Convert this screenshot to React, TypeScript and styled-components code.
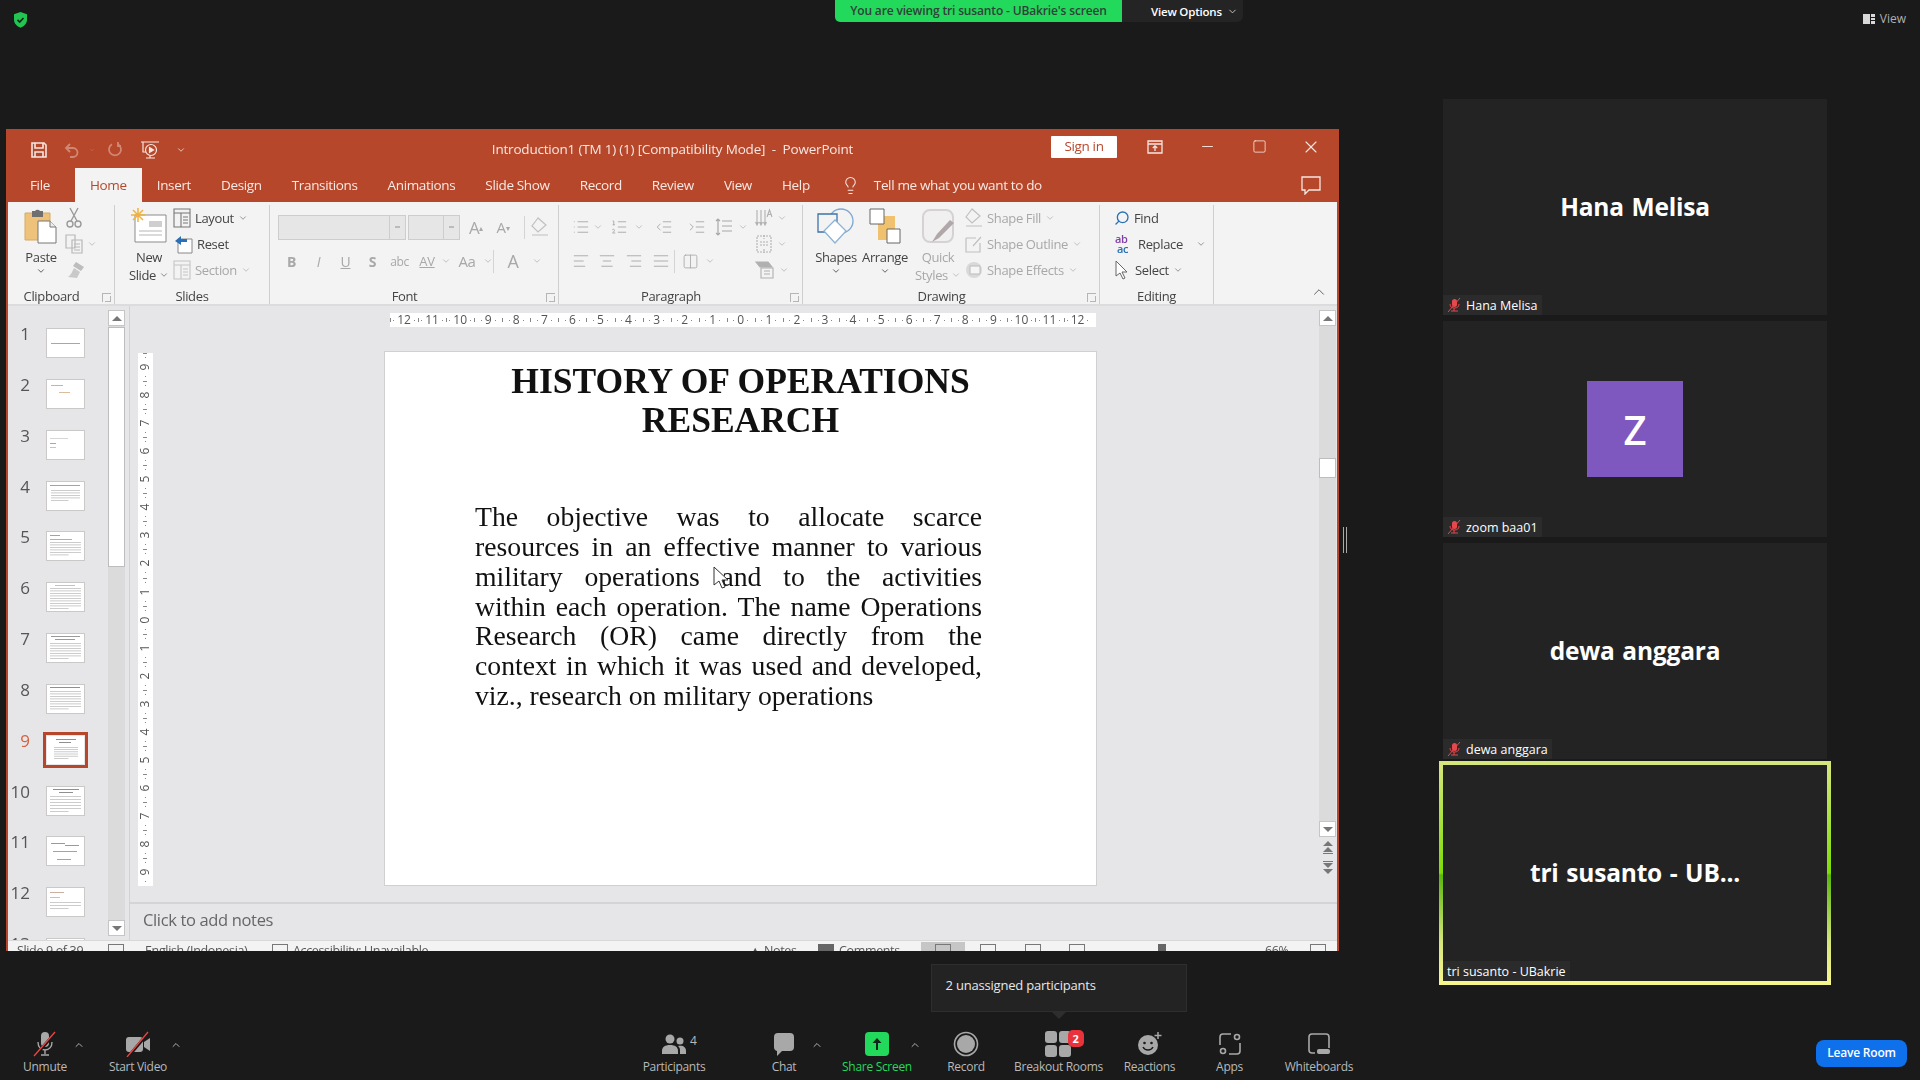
import React from "react";
import styled, { createGlobalStyle } from "styled-components";
import {
  AlignCenter,
  AlignJustify,
  AlignLeft,
  AlignRight,
  ChevronDown,
  ChevronUp,
  Columns2,
  IndentDecrease,
  IndentIncrease,
  Lightbulb,
  List,
  ListOrdered,
  Minus,
  Search,
  Square,
  X,
} from "lucide-react";

const ACCENT = "#b7472a";
const MUTED = "#a8a8a8";
const UI_FONT = '"Open Sans", "Noto Sans", sans-serif';

const GlobalStyle = createGlobalStyle`
  html, body { margin: 0; padding: 0; background: #1a1a1a; }
  #root { width: 1920px; height: 1080px; overflow: hidden; }
  * { box-sizing: border-box; }
`;

const Page = styled.div`
  width: 1920px;
  height: 1080px;
  display: flex;
  flex-direction: column;
  background: #1a1a1a;
  font-family: ${UI_FONT};
  color: #fff;
`;

/* ---- zoom top strip ---- */
const TopBar = styled.header`
  height: 22px;
  display: flex;
  align-items: flex-start;
`;
const ShieldSlot = styled.div`
  width: 835px;
  padding: 11px 0 0 12px;
`;
const ViewingBanner = styled.div`
  width: 287px;
  height: 22px;
  background: #23d95c;
  border-bottom-left-radius: 5px;
  color: #2f4238;
  font-size: 12px;
  font-weight: 600;
  line-height: 21px;
  letter-spacing: -0.15px;
  text-align: center;
`;
const OptionsButton = styled.div`
  width: 121px;
  height: 22px;
  background: #242424;
  border-bottom-right-radius: 6px;
  display: flex;
  align-items: center;
  padding-left: 29px;
  gap: 5px;
  font-size: 11.5px;
  font-weight: 600;
  letter-spacing: -0.2px;
`;
const ViewToggle = styled.div`
  margin: 10px 14px 0 auto;
  display: flex;
  align-items: center;
  gap: 5px;
  font-size: 12px;
  color: #b0b0b0;
`;

/* ---- middle ---- */
const Middle = styled.main`
  flex: 1;
  display: flex;
  min-height: 0;
  padding-left: 6px;
`;
const SharedScreen = styled.div`
  padding-top: 107px;
`;
const Handle = styled.div`
  width: 4px;
  height: 26px;
  margin: 505px 0 0 4px;
  border-left: 1px solid #aaa;
  border-right: 1px solid #aaa;
`;

/* ---- powerpoint ---- */
const Window = styled.section`
  width: 1333px;
  height: 822px;
  overflow: hidden;
  background: ${ACCENT};
  padding: 0 2px;
  display: flex;
  flex-direction: column;
  filter: blur(0.45px);
  font-size: 13px;
  letter-spacing: -0.35px;
  color: #444;
`;
const TitleRow = styled.div`
  height: 39px;
  flex: none;
  margin: 0 -2px;
  display: grid;
  grid-template-columns: 1fr auto 1fr;
  align-items: center;
  color: #f6e7e2;
  font-size: 13.5px;
`;
const WindowTitle = styled.div`
  letter-spacing: -0.2px;
  padding-top: 1px;
`;
const QuickAccess = styled.div`
  display: flex;
  align-items: center;
  padding: 2px 0 0 17px;
`;
const QatButton = styled.span<{ $off?: boolean; $w: number }>`
  width: ${(p) => p.$w}px;
  display: flex;
  justify-content: center;
  opacity: ${(p) => (p.$off ? 0.35 : 1)};
`;
const WindowButtons = styled.div`
  display: flex;
  align-items: center;
  justify-content: flex-end;
  margin-top: -4px;
  padding-right: 2px;
`;
const SignIn = styled.div`
  width: 66px;
  height: 22px;
  margin-right: 12px;
  background: #fff;
  color: ${ACCENT};
  font-size: 13.5px;
  line-height: 21px;
  text-align: center;
  border-radius: 1px;
`;
const CaptionButton = styled.span`
  width: 52px;
  display: flex;
  justify-content: center;
`;
const TabRow = styled.nav`
  height: 34px;
  flex: none;
  display: flex;
  align-items: stretch;
  margin: 0 -2px;
  padding-left: 9px;
  color: #f7e9e4;
  font-size: 13.5px;
`;
const Tab = styled.div<{ $active?: boolean; $mr?: number }>`
  padding: 0 15px;
  margin-right: ${(p) => p.$mr ?? 0}px;
  display: flex;
  align-items: center;
  background: ${(p) => (p.$active ? "#f3f3f3" : "transparent")};
  color: ${(p) => (p.$active ? ACCENT : "inherit")};
  font-weight: ${(p) => (p.$active ? 500 : 400)};
`;
const TellMe = styled.div`
  margin-left: 16px;
  display: flex;
  align-items: center;
  gap: 14px;
`;
const CommentSlot = styled.div`
  margin-left: auto;
  padding-right: 18px;
  display: flex;
  align-items: center;
`;

const Ribbon = styled.div`
  height: 104px;
  flex: none;
  background: #f3f3f3;
  border-bottom: 2px solid #dcdcdc;
  display: flex;
  padding: 3px 0 0;
  position: relative;
`;
const Group = styled.div<{ $w: number }>`
  width: ${(p) => p.$w}px;
  flex: none;
  display: flex;
  flex-direction: column;
  position: relative;
  border-right: 1px solid #cfcfcf;
`;
const GroupBody = styled.div<{ $pad?: number }>`
  height: 83px;
  flex: none;
  display: flex;
  padding-left: ${(p) => p.$pad ?? 0}px;
`;
const GroupLabel = styled.div<{ $shift?: boolean }>`
  flex: 1;
  text-align: center;
  font-size: 13px;
  line-height: 17px;
  padding-right: ${(p) => (p.$shift ? 19 : 0)}px;
  color: #444;
`;
const Launcher = styled.span`
  position: absolute;
  right: 3px;
  bottom: 2px;
  width: 9px;
  height: 9px;
  border: 1px solid #b5b5b5;
  border-width: 1px 0 0 1px;
  &::after {
    content: "";
    position: absolute;
    right: 0;
    bottom: 0;
    width: 5px;
    height: 5px;
    border: 1px solid #b5b5b5;
    border-width: 0 1px 1px 0;
  }
`;
const BigButton = styled.div<{ $w: number; $off?: boolean }>`
  width: ${(p) => p.$w}px;
  flex: none;
  display: flex;
  flex-direction: column;
  align-items: center;
  color: ${(p) => (p.$off ? MUTED : "#444")};
  line-height: 18px;
`;
const BigIcon = styled.div`
  height: 43px;
  display: flex;
  align-items: flex-start;
  justify-content: center;
  padding-top: 3px;
`;
const Stack = styled.div<{ $w?: number }>`
  ${(p) => (p.$w ? `width: ${p.$w}px;` : "")}
  flex: none;
  display: flex;
  flex-direction: column;
`;
const SmallRow = styled.div<{ $off?: boolean }>`
  height: 26px;
  flex: none;
  display: flex;
  align-items: center;
  gap: 4px;
  color: ${(p) => (p.$off ? MUTED : "#444")};
  white-space: nowrap;
`;
const FontRow = styled.div<{ $h: number }>`
  height: ${(p) => p.$h}px;
  flex: none;
  display: flex;
  align-items: center;
  color: ${MUTED};
`;
const Combo = styled.div<{ $w: number }>`
  width: ${(p) => p.$w}px;
  height: 25px;
  margin-right: 2px;
  background: #e6e6e6;
  border: 1px solid #cdcdcd;
  display: flex;
  justify-content: flex-end;
  align-items: center;
  &::after {
    content: "";
    width: 15px;
    height: 100%;
    border-left: 1px solid #cdcdcd;
    background: linear-gradient(#bbb, #bbb) center / 5px 2px no-repeat;
  }
`;
const Cell = styled.span<{ $w: number; $size?: number; $weight?: number; $italic?: boolean; $under?: boolean }>`
  width: ${(p) => p.$w}px;
  flex: none;
  display: inline-flex;
  align-items: center;
  justify-content: center;
  font-size: ${(p) => p.$size ?? 14}px;
  font-weight: ${(p) => p.$weight ?? 400};
  font-style: ${(p) => (p.$italic ? "italic" : "normal")};
  text-decoration: ${(p) => (p.$under ? "underline" : "none")};
`;
const Raised = styled.sup`
  font-size: 8px;
`;
const VSep = styled.span`
  width: 1px;
  height: 23px;
  background: #d4d4d4;
  flex: none;
`;
const CollapseSlot = styled.span`
  position: absolute;
  right: 9px;
  bottom: -1px;
  color: #555;
`;

const Workspace = styled.div`
  height: 634px;
  flex: none;
  display: flex;
  background: #e6e6e8;
`;
const SlidePane = styled.aside`
  width: 122px;
  flex: none;
  display: flex;
  border-right: 1px solid #d2d2d2;
  height: 634px;
`;
const ThumbList = styled.div`
  width: 100px;
  height: 634px;
  overflow: hidden;
  padding-top: 23px;
  flex: none;
`;
const ThumbRow = styled.div`
  height: 50.85px;
  flex: none;
  display: flex;
  gap: 17px;
  align-items: flex-start;
`;
const ThumbNum = styled.span<{ $active?: boolean }>`
  width: 22px;
  margin-top: -5px;
  text-align: right;
  font-size: 17px;
  line-height: 20px;
  letter-spacing: 0;
  color: ${(p) => (p.$active ? "#d5613f" : "#555")};
`;
const Thumb = styled.svg<{ $active?: boolean }>`
  width: 37px;
  height: 28px;
  background: #fff;
  outline: ${(p) => (p.$active ? `3px solid ${ACCENT}` : "1px solid #cbc8c8")};
  outline-offset: ${(p) => (p.$active ? "1px" : "0")};
  display: block;
`;
const Scrollbar = styled.div<{ $h: number }>`
  width: 17px;
  height: ${(p) => p.$h}px;
  margin-top: 4px;
  flex: none;
  background: #dcdbdc;
  display: flex;
  flex-direction: column;
  align-items: center;
  justify-content: flex-start;
`;
const ScrollStep = styled.div<{ $down?: boolean }>`
  width: 17px;
  height: 16px;
  flex: none;
  background: #fff;
  border: 1px solid #c5c5c5;
  display: flex;
  align-items: center;
  justify-content: center;
  &::after {
    content: "";
    border-left: 5px solid transparent;
    border-right: 5px solid transparent;
    ${(p) => (p.$down ? "border-top" : "border-bottom")}: 5px solid #777;
  }
`;
const ScrollThumb = styled.div<{ $h: number; $top?: number }>`
  width: 17px;
  height: ${(p) => p.$h}px;
  flex: none;
  margin-top: ${(p) => p.$top ?? 1}px;
  background: #fff;
  border: 1px solid #bdbdbd;
`;
const ScrollGap = styled.div`
  flex: 1;
`;
const RightRail = styled.div`
  width: 17px;
  margin-right: 1px;
  flex: none;
  display: flex;
  flex-direction: column;
  align-items: center;
`;
const PageStep = styled.div`
  height: 20px;
  flex: none;
  display: flex;
  align-items: center;
  justify-content: center;
`;

const EditorColumn = styled.div`
  flex: 1;
  min-width: 0;
  display: flex;
  flex-direction: column;
`;
const EditorMain = styled.div`
  height: 596px;
  flex: none;
  display: flex;
`;
const Canvas = styled.div`
  flex: 1;
  min-width: 0;
  display: flex;
  flex-direction: column;
  padding-top: 7px;
`;
const HRuler = styled.div`
  margin-left: 260px;
  width: 706px;
  height: 14px;
  flex: none;
  background: #fff;
  display: flex;
`;
const RulerCell = styled.span`
  position: relative;
  width: 28.07px;
  flex: none;
  display: flex;
  align-items: center;
  justify-content: center;
  gap: 3px;
  font-size: 12px;
  letter-spacing: 0;
  line-height: 14px;
  color: #555;
`;
const Tick = styled.i`
  position: absolute;
  left: 0;
  top: 5px;
  width: 1px;
  height: 4px;
  background: #888;
`;
const Dot = styled.i`
  width: 1px;
  height: 1px;
  background: #888;
  flex: none;
`;
const CanvasBody = styled.div`
  display: flex;
  align-items: flex-start;
  padding: 24px 0 0 8px;
`;
const VRuler = styled.div`
  width: 15px;
  height: 533px;
  margin-top: 2px;
  flex: none;
  background: #fff;
  display: flex;
  flex-direction: column;
`;
const VRulerCell = styled.span`
  position: relative;
  height: 28.07px;
  flex: none;
  display: flex;
  flex-direction: column;
  align-items: center;
  justify-content: center;
  gap: 3px;
  font-size: 12px;
  letter-spacing: 0;
  line-height: 12px;
  color: #555;
  & b {
    font-weight: 400;
    transform: rotate(-90deg);
  }
`;
const VTick = styled.i`
  position: absolute;
  left: 5px;
  top: 0;
  width: 4px;
  height: 1px;
  background: #888;
`;
const Slide = styled.article`
  width: 713px;
  height: 535px;
  margin-left: 231px;
  flex: none;
  position: relative;
  background: #fff;
  border: 1px solid #d0d0d0;
  color: #111;
  font-family: "Liberation Serif", "Times New Roman", serif;
  letter-spacing: 0;
  padding-top: 10px;
`;
const SlideTitle = styled.h1`
  margin: 0;
  font-size: 35.5px;
  line-height: 38.5px;
  font-weight: 700;
  text-align: center;
`;
const SlideBody = styled.p`
  margin: 63px 0 0 90px;
  width: 507px;
  font-size: 27.7px;
  line-height: 29.85px;
  text-align: justify;
`;
const Pointer = styled.svg`
  position: absolute;
  left: 328px;
  top: 214px;
`;
const NotesRow = styled.div`
  height: 38px;
  flex: none;
  border-top: 2px solid #d4d4d4;
  padding: 4px 0 0 13px;
  font-size: 16.5px;
  color: #666;
`;
const StatusBar = styled.footer`
  height: 30px;
  flex: none;
  background: #f3f3f3;
  border-top: 1px solid #d8d8d8;
  display: flex;
  padding-top: 1px;
  font-size: 12.5px;
  color: #555;
`;
const StatusItem = styled.span<{ $w: number; $on?: boolean; $pad?: number }>`
  width: ${(p) => p.$w}px;
  padding-left: ${(p) => p.$pad ?? 0}px;
  flex: none;
  display: flex;
  gap: 5px;
  white-space: nowrap;
  background: ${(p) => (p.$on ? "#c6c6c6" : "transparent")};
`;
const StatusGlyph = styled.span<{ $solid?: boolean; $narrow?: boolean }>`
  width: ${(p) => (p.$narrow ? 8 : 16)}px;
  height: 16px;
  margin-top: 2px;
  flex: none;
  border: 1.5px solid ${(p) => (p.$solid ? "#666" : "#777")};
  background: ${(p) => (p.$solid ? "#666" : "transparent")};
`;

/* ---- gallery ---- */
const Gallery = styled.aside`
  width: 392px;
  margin-left: 92px;
  padding-top: 77px;
  display: flex;
  flex-direction: column;
  align-items: center;
  gap: 6px;
`;
const Tile = styled.div<{ $active?: boolean }>`
  position: relative;
  width: ${(p) => (p.$active ? 392 : 384)}px;
  height: ${(p) => (p.$active ? 224 : 216)}px;
  flex: none;
  margin-top: ${(p) => (p.$active ? -4 : 0)}px;
  display: flex;
  align-items: center;
  justify-content: center;
  background: #232323;
  ${(p) =>
    p.$active
      ? "border: 4px solid; border-image: linear-gradient(#d6e67c, #7fdc06 50%, #5cb60c 51%, #d6e67c 82%, #f6f68c) 1;"
      : ""}
`;
const TileName = styled.div`
  padding-bottom: 2px;
  font-size: 24.5px;
  font-weight: 700;
  letter-spacing: -0.2px;
  word-spacing: 1.5px;
  color: #fff;
`;
const Avatar = styled.div`
  width: 96px;
  height: 96px;
  background: #7f58bf;
  display: flex;
  align-items: center;
  justify-content: center;
  font-size: 40px;
  font-weight: 600;
`;
const NameChip = styled.div`
  position: absolute;
  left: 0;
  bottom: 0;
  height: 20px;
  padding: 0 4px;
  display: flex;
  align-items: center;
  gap: 5px;
  background: #2b2b2b;
  font-size: 12.5px;
  color: #fff;
`;

/* ---- zoom toolbar ---- */
const Toolbar = styled.footer`
  height: 56px;
  flex: none;
  display: flex;
  padding-left: 8px;
`;
const ToolGroup = styled.div<{ $left?: number }>`
  display: flex;
  ${(p) => (p.$left ? `margin-left: ${p.$left}px;` : "")}
`;
const ToolItem = styled.div<{ $w: number; $green?: boolean; $mr?: number }>`
  position: relative;
  width: ${(p) => p.$w}px;
  margin-right: ${(p) => p.$mr ?? 0}px;
  flex: none;
  display: flex;
  flex-direction: column;
  align-items: center;
  padding-top: 6px;
  font-size: 12px;
  letter-spacing: -0.3px;
  white-space: nowrap;
  color: ${(p) => (p.$green ? "#23d95c" : "#b9b9b9")};
`;
const ToolIcon = styled.div`
  height: 28px;
  display: flex;
  align-items: center;
  justify-content: center;
  position: relative;
`;
const Caret = styled.span<{ $x: number }>`
  position: absolute;
  top: 14px;
  left: calc(50% + ${(p) => p.$x}px);
  color: #b0b0b0;
`;
const CountLabel = styled.span`
  position: absolute;
  left: 100%;
  top: 2px;
  margin-left: 4px;
  font-size: 12px;
  color: #b9b9b9;
`;
const Badge = styled.span`
  position: absolute;
  top: 0;
  left: 23px;
  width: 16px;
  height: 17px;
  border-radius: 5px;
  background: #e9323c;
  color: #fff;
  font-size: 11px;
  font-weight: 700;
  line-height: 17px;
  text-align: center;
`;
const Hint = styled.div`
  position: absolute;
  left: calc(50% - 128px);
  bottom: calc(100% + 12px);
  width: 256px;
  height: 48px;
  padding: 0 0 6px 14px;
  background: #232323;
  border: 1px solid #2e2e2e;
  display: flex;
  align-items: center;
  font-size: 13px;
  letter-spacing: -0.2px;
  color: #e8e8e8;
  &::after {
    content: "";
    position: absolute;
    left: 119px;
    top: 100%;
    border-left: 8px solid transparent;
    border-right: 8px solid transparent;
    border-top: 8px solid #2e2e2e;
  }
`;
const LeaveButton = styled.div`
  width: 91px;
  height: 27px;
  margin: 16px 13px 0 auto;
  border-radius: 8px;
  background: #0e71eb;
  color: #fff;
  font-size: 12px;
  font-weight: 600;
  letter-spacing: -0.2px;
  line-height: 26px;
  text-align: center;
`;

/* ---- drawings ---- */
const Shield = () => (
  <svg width="17" height="18" viewBox="0 0 17 18">
    <path d="M8.5 1 15 3.2v5.3c0 4-2.8 6.8-6.5 8.2C4.8 15.3 2 12.5 2 8.5V3.2z" fill="#23c552" />
    <path d="m5.5 8.8 2.2 2.2 3.8-4" fill="none" stroke="#10281a" strokeWidth="1.7" />
  </svg>
);
const SaveIcon = () => (
  <svg width="18" height="18" viewBox="0 0 18 18" fill="none" stroke="#f6e7e2" strokeWidth="1.6">
    <path d="M2 2h12l2 2v12H2z" />
    <path d="M5 2v5h8V2M5 16v-5h8v5" />
  </svg>
);
const UndoIcon = () => (
  <svg width="16" height="16" viewBox="0 0 16 16" fill="none" stroke="#fff" strokeWidth="1.8">
    <path d="M6 2 2 6l4 4M2 6h7a4.5 4.5 0 0 1 0 9H6" />
  </svg>
);
const RedoIcon = () => (
  <svg width="16" height="17" viewBox="0 0 16 17" fill="none" stroke="#fff" strokeWidth="1.8">
    <path d="M11 3.2a6 6 0 1 1-6 0M11 1v4h3" />
  </svg>
);
const PresentIcon = () => (
  <svg width="20" height="20" viewBox="0 0 20 20" fill="none" stroke="#f6e7e2" strokeWidth="1.2">
    <path d="M1 2h18M3 2v10h3M6 18h9" />
    <circle cx="11" cy="10" r="5.5" />
    <path d="m9.5 7.5 4 2.5-4 2.5z" fill="#f6e7e2" />
    <path d="M10 15.5V18" />
  </svg>
);
const RibbonDisplay = () => (
  <svg width="16" height="14" viewBox="0 0 16 14" fill="none" stroke="#f6e7e2" strokeWidth="1.3">
    <path d="M1 1h14v12H1zM1 4h14M8 11V6M5.8 8 8 5.8 10.2 8" />
  </svg>
);
const CommentIcon = () => (
  <svg width="20" height="19" viewBox="0 0 20 19" fill="none" stroke="#f6e7e2" strokeWidth="1.3">
    <path d="M1 1h18v13H8l-4 4v-4H1z" />
  </svg>
);
const PasteIcon = () => (
  <svg width="34" height="36" viewBox="0 0 34 36">
    <path d="M1 5h25v27H1z" fill="#eec27a" stroke="#d7ab62" />
    <path d="M8 3h3a3 3 0 0 1 5 0h3v6H8z" fill="#6f6f6f" />
    <path d="M14 13h12l6 6v16H14z" fill="#fff" stroke="#777" />
    <path d="M26 13v6h6" fill="#eee" stroke="#777" />
  </svg>
);
const ScissorsIcon = () => (
  <svg width="18" height="22" viewBox="0 0 18 22" fill="none" stroke="#9a9a9a" strokeWidth="1.4">
    <circle cx="5" cy="17" r="3" />
    <circle cx="13" cy="17" r="3" />
    <path d="M6 14 13 1M12 14 5 1" />
  </svg>
);
const CopyIcon = () => (
  <svg width="18" height="20" viewBox="0 0 18 20" fill="none" stroke="#b8b8b8" strokeWidth="1.2">
    <path d="M1 1h9v13H1zM7 6h10v13H7zM9 10h6M9 13h6M9 16h6" />
  </svg>
);
const PainterIcon = () => (
  <svg width="20" height="18" viewBox="0 0 20 18">
    <path d="M11 1 19 6l-3 4-8-5z" fill="#bdbdbd" />
    <path d="M9 7 15 11l-3 6-9-1c3-2 4-5 6-9z" fill="#c9c9c9" />
  </svg>
);
const NewSlideIcon = () => (
  <svg width="36" height="36" viewBox="0 0 36 36">
    <path d="M4 7h31v27H4z" fill="#fff" stroke="#8b8b8b" />
    <path d="M18 13h13v6H18z" fill="#cfcfcf" />
    <path d="M8 23h23M8 27h23" stroke="#b5b5b5" />
    <g stroke="#f0b341" strokeWidth="1.5">
      <path d="M7 0v14M0 7h14M2 2l10 10M12 2 2 12" />
    </g>
  </svg>
);
const LayoutIcon = ({ off }: { off?: boolean }) => (
  <svg width="18" height="20" viewBox="0 0 18 20" fill="none" stroke={off ? "#c4c4c4" : "#777"} strokeWidth="1.1">
    <path d="M1 1h16v18H1zM1 5h16M8 5v14M10 9h5M10 12h5M10 15h5" />
  </svg>
);
const ResetIcon = () => (
  <svg width="20" height="20" viewBox="0 0 20 20">
    <path d="M5 5h14v14H5z" fill="#fff" stroke="#888" />
    <path d="M8 2 2 7l6 4V8h6V5H8z" fill="#2a70b5" />
  </svg>
);
const ShapesIcon = () => (
  <svg width="38" height="36" viewBox="0 0 38 36" fill="none" strokeWidth="1.3">
    <circle cx="24" cy="13" r="12" stroke="#7fa8cf" />
    <path d="M1 6h19v18H1z" fill="#f3f3f3" stroke="#3e74a8" />
    <path d="m18 12 11 11-11 12L7 23z" fill="#fff" stroke="#8cb2d6" />
  </svg>
);
const ArrangeIcon = () => (
  <svg width="32" height="36" viewBox="0 0 32 36">
    <path d="M9 8h17v24H9z" fill="#f0c26f" />
    <path d="M1 1h14v15H1z" fill="#fff" stroke="#666" />
    <path d="M18 21h13v14H18z" fill="#fff" stroke="#666" />
  </svg>
);
const QuickStylesIcon = () => (
  <svg width="34" height="38" viewBox="0 0 34 38">
    <rect x="2" y="2" width="30" height="32" rx="7" fill="#f0f0f0" stroke="#d6d2d2" strokeWidth="2" />
    <path d="M33 15 18 30l-7 4 5-8 13-14z" fill="#b0a8a8" />
  </svg>
);
const FillIcon = () => (
  <svg width="18" height="20" viewBox="0 0 18 20" fill="none" stroke="#c0c0c0" strokeWidth="1.2">
    <path d="M7 1 1 9l6 6 8-7zM1 18h16" />
  </svg>
);
const OutlineIcon = () => (
  <svg width="18" height="18" viewBox="0 0 18 18" fill="none" stroke="#c0c0c0" strokeWidth="1.2">
    <path d="M1 3h10M1 3v14h14V8M8 11 16 2" />
  </svg>
);
const EffectsIcon = () => (
  <svg width="18" height="18" viewBox="0 0 18 18">
    <circle cx="9" cy="9" r="8" fill="#d9d9d9" />
    <path d="M5 5h10v8H5z" fill="#f5f5f5" stroke="#bbb" />
  </svg>
);
const ReplaceIcon = () => (
  <svg width="20" height="20" viewBox="0 0 20 20" fontSize="11" fontFamily={UI_FONT} fontWeight="600">
    <text x="1" y="9" fill="#7f3fa8">ab</text>
    <text x="3" y="19" fill="#2a70b5">ac</text>
  </svg>
);
const SelectIcon = () => (
  <svg width="14" height="20" viewBox="0 0 14 20" fill="#fff" stroke="#666">
    <path d="M2 1v15l4-3 3 6 2-1-3-6h5z" />
  </svg>
);
const TextDirIcon = () => (
  <svg width="18" height="20" viewBox="0 0 18 20" fill="none" stroke="#b0b0b0" strokeWidth="1.1">
    <path d="M2 2v14M6 2v14M10 2v14M.5 14 2 17l1.5-3M4.5 14 6 17l1.5-3M8.5 14l1.5 3 1.5-3" />
    <path d="m12 9 2.5-7L17 9M13 6.5h3" />
  </svg>
);
const AlignTextIcon = () => (
  <svg width="18" height="20" viewBox="0 0 18 20" fill="none" stroke="#b0b0b0" strokeWidth="1.1">
    <path d="M2 2h14v16H2zM5 8h8M5 11h8M9 1v4M9 15v4" strokeDasharray="2 1" />
  </svg>
);
const SmartArtIcon = () => (
  <svg width="20" height="20" viewBox="0 0 20 20" fill="none" stroke="#b0b0b0" strokeWidth="1.1">
    <path d="M1 2h12l4 5H5z" fill="#b0b0b0" />
    <path d="M6 8h12v10H6zM9 11h6M9 14h6" />
  </svg>
);
const LineSpacing = () => (
  <svg width="18" height="20" viewBox="0 0 18 20" fill="none" stroke="#a8a8a8" strokeWidth="1.2">
    <path d="M7 4h10M7 9h10M7 14h10M3 2v16M1 4l2-2 2 2M1 16l2 2 2-2" />
  </svg>
);
const PageUp = () => (
  <svg width="12" height="13" viewBox="0 0 12 13" fill="#777">
    <path d="M6 0 11 5H1zM6 6l5 5H1z" />
    <path d="M1 12h10v1H1z" />
  </svg>
);
const PageDown = () => (
  <svg width="12" height="13" viewBox="0 0 12 13" fill="#777">
    <path d="M1 0h10v1H1zM1 2h10L6 7zM1 8h10l-5 5z" />
  </svg>
);
const Cursor = () => (
  <Pointer width="16" height="24" viewBox="0 0 16 24" fill="#fff" stroke="#333">
    <path d="M1 1v18l5-4 3 7 3-1-3-7h6z" />
  </Pointer>
);
const SlashMic = () => (
  <svg width="26" height="26" viewBox="0 0 26 26" fill="none">
    <rect x="9" y="1" width="8" height="15" rx="4" fill="#a8a8a8" />
    <path d="M6 11c0 5 3 8 7 8s7-3 7-8M13 19v4M9 24h8" stroke="#a8a8a8" strokeWidth="1.4" />
    <path d="M3 25 24 1" stroke="#1a1a1a" strokeWidth="3" />
    <path d="M2 25 23 1" stroke="#e44" strokeWidth="1.3" />
  </svg>
);
const SlashVideo = () => (
  <svg width="26" height="26" viewBox="0 0 26 26" fill="none">
    <rect x="1" y="6" width="17" height="15" rx="3" fill="#a8a8a8" />
    <path d="M19 11 25 7v13l-6-4z" fill="#a8a8a8" />
    <path d="M3 26 24 1" stroke="#1a1a1a" strokeWidth="3" />
    <path d="M2 26 23 1" stroke="#e44" strokeWidth="1.3" />
  </svg>
);
const PeopleIcon = () => (
  <svg width="24" height="21" viewBox="0 0 24 21" fill="#a8a8a8">
    <circle cx="8" cy="5" r="4.5" />
    <circle cx="18" cy="7" r="3.5" />
    <path d="M0 20v-3c0-4 3-6 8-6s8 2 8 6v3z" />
    <path d="M18 20v-4c0-2-1-3-2-4 5-1 8 1 8 5v3z" />
  </svg>
);
const ChatIcon = () => (
  <svg width="22" height="25" viewBox="0 0 22 25" fill="#a8a8a8">
    <path d="M5 1h12a4 4 0 0 1 4 4v10a4 4 0 0 1-4 4H9l-5 5v-5a4 4 0 0 1-3-4V5a4 4 0 0 1 4-4z" />
  </svg>
);
const ShareIcon = () => (
  <svg width="24" height="24" viewBox="0 0 24 24">
    <rect width="24" height="24" rx="4" fill="#23d95c" />
    <path d="M12 6 7.5 11H11v7h2v-7h3.5z" fill="#10241a" />
  </svg>
);
const RecordIcon = () => (
  <svg width="26" height="26" viewBox="0 0 26 26">
    <circle cx="13" cy="13" r="11.5" fill="none" stroke="#a8a8a8" strokeWidth="1.6" />
    <circle cx="13" cy="13" r="9" fill="#a8a8a8" />
  </svg>
);
const BreakoutIcon = () => (
  <svg width="28" height="28" viewBox="0 0 28 28" fill="#a8a8a8">
    <rect x="0" y="1" width="12" height="12" rx="3" />
    <rect x="14" y="1" width="12" height="12" rx="3" />
    <rect x="0" y="15" width="12" height="12" rx="3" />
    <rect x="14" y="15" width="12" height="12" rx="3" />
  </svg>
);
const ReactionIcon = () => (
  <svg width="26" height="26" viewBox="0 0 26 26">
    <circle cx="11" cy="14" r="10" fill="#a8a8a8" />
    <circle cx="7.5" cy="12" r="1.3" fill="#1a1a1a" />
    <circle cx="14.5" cy="12" r="1.3" fill="#1a1a1a" />
    <path d="M6 16c2 4 8 4 10 0" fill="none" stroke="#1a1a1a" strokeWidth="1.4" />
    <path d="M21 1v7M17.5 4.5h7" stroke="#a8a8a8" strokeWidth="1.5" />
  </svg>
);
const AppsIcon = () => (
  <svg width="24" height="24" viewBox="0 0 24 24" fill="none" stroke="#a8a8a8" strokeWidth="1.6">
    <path d="M13 2H5a3 3 0 0 0-3 3v8M11 22h8a3 3 0 0 0 3-3v-8" />
    <circle cx="19" cy="5" r="2.5" />
    <circle cx="5" cy="19" r="2.5" />
  </svg>
);
const BoardIcon = () => (
  <svg width="24" height="24" viewBox="0 0 24 24" fill="none" stroke="#a8a8a8" strokeWidth="1.6">
    <path d="M8 21H5a3 3 0 0 1-3-3V5a3 3 0 0 1 3-3h14a3 3 0 0 1 3 3v11" />
    <rect x="10" y="17" width="13" height="5" rx="2" fill="#a8a8a8" stroke="none" />
  </svg>
);
const MutedMic = () => (
  <svg width="14" height="14" viewBox="0 0 14 14" fill="none">
    <rect x="5" y="1" width="5" height="8" rx="2.5" fill="#e5484d" />
    <path d="M3 6c0 3 2 4 4.5 4S12 9 12 6M7 10v3M4 13h7" stroke="#e5484d" />
    <path d="M1 14 13 0" stroke="#e5484d" />
  </svg>
);
const ViewGridIcon = () => (
  <svg width="12" height="12" viewBox="0 0 12 12" fill="#d8d8d8">
    <path d="M0 1h7v10H0zM8 1h4v3H8zM8 5h4v2H8zM8 8h4v3H8z" />
  </svg>
);

/* ---- data ---- */
type Bar = [number, number, number, string?];

const textLines = (top: number, count: number, step: number, left = 4, width = 29): Bar[] =>
  Array.from({ length: count }, (_, i) => [left, top + i * step, i === count - 1 ? width * 0.6 : width] as Bar);

const THUMBS: Bar[][] = [
  [[4, 14, 29, "#c9405a"]],
  [[4, 5, 12, "#888"], [12, 12, 11, "#c09060"]],
  [[3, 7, 18, "#bbb"], [3, 12, 6, "#c9405a"], [3, 16, 6, "#999"]],
  [[3, 3, 30, "#666"], ...textLines(8, 5, 2.5)],
  [[3, 3, 10, "#666"], [3, 7, 22, "#5080c0"], ...textLines(10, 6, 2.5, 3, 31)],
  [[8, 2, 20, "#999"], ...textLines(5, 9, 2.5, 3, 31)],
  [[4, 2, 29, "#555"], [8, 5, 20, "#555"], ...textLines(9, 7, 2.5, 3, 31)],
  [[3, 2, 30, "#444"], ...textLines(6, 8, 2.5, 3, 31)],
  [[9, 3, 20, "#444"], [12, 6, 12, "#444"], ...textLines(11, 6, 2.2, 7, 24)],
  [[6, 2, 26, "#444"], [12, 5, 14, "#444"], ...textLines(9, 6, 3, 3, 31)],
  [[4, 6, 14, "#555"], [18, 8, 14, "#555"], [6, 14, 24, "#666"], [10, 22, 14, "#666"]],
  [[3, 4, 14, "#aa7766"], [3, 9, 10, "#999"], ...textLines(14, 3, 3, 3, 31)],
  [[3, 3, 20, "#888"]],
];

const RULER_H = [12, 11, 10, 9, 8, 7, 6, 5, 4, 3, 2, 1, 0, 1, 2, 3, 4, 5, 6, 7, 8, 9, 10, 11, 12];
const RULER_V = [9, 8, 7, 6, 5, 4, 3, 2, 1, 0, 1, 2, 3, 4, 5, 6, 7, 8, 9];
const TABS = ["Insert", "Design", "Transitions", "Animations", "Slide Show", "Record", "Review", "View", "Help"];

const Tiny = ({ color = MUTED }: { color?: string }) => <ChevronDown size={10} color={color} strokeWidth={1.6} />;

const GroupFoot = ({ label, launcher }: { label: string; launcher?: boolean }) => (
  <>
    <GroupLabel $shift={launcher}>{label}</GroupLabel>
    {launcher && <Launcher />}
  </>
);

export default function App() {
  return (
    <Page>
      <GlobalStyle />
      <TopBar>
        <ShieldSlot>
          <Shield />
        </ShieldSlot>
        <ViewingBanner>You are viewing tri susanto - UBakrie's screen</ViewingBanner>
        <OptionsButton>
          View Options <ChevronDown size={11} strokeWidth={2} color="#ccc" />
        </OptionsButton>
        <ViewToggle>
          <ViewGridIcon /> View
        </ViewToggle>
      </TopBar>

      <Middle>
        <SharedScreen>
          <Window>
            <TitleRow>
              <QuickAccess>
                <QatButton $w={32}><SaveIcon /></QatButton>
                <QatButton $off $w={34}><UndoIcon /></QatButton>
                <QatButton $off $w={6}><Tiny color="#fff" /></QatButton>
                <QatButton $off $w={40}><RedoIcon /></QatButton>
                <QatButton $w={30}><PresentIcon /></QatButton>
                <QatButton $w={32}><Tiny color="#fff" /></QatButton>
              </QuickAccess>
              <WindowTitle>Introduction1 (TM 1) (1) [Compatibility Mode]&nbsp; -&nbsp; PowerPoint</WindowTitle>
              <WindowButtons>
                <SignIn>Sign in</SignIn>
                <CaptionButton><RibbonDisplay /></CaptionButton>
                <CaptionButton><Minus size={17} strokeWidth={1.3} /></CaptionButton>
                <CaptionButton><Square size={15} strokeWidth={1.3} /></CaptionButton>
                <CaptionButton><X size={20} strokeWidth={1.3} /></CaptionButton>
              </WindowButtons>
            </TitleRow>

            <TabRow>
              <Tab $mr={10}>File</Tab>
              <Tab $active>Home</Tab>
              {TABS.map((t) => (
                <Tab key={t}>{t}</Tab>
              ))}
              <TellMe>
                <Lightbulb size={19} strokeWidth={1.3} />
                Tell me what you want to do
              </TellMe>
              <CommentSlot>
                <CommentIcon />
              </CommentSlot>
            </TabRow>

            <Ribbon>
              <Group $w={107}>
                <GroupBody $pad={9}>
                  <BigButton $w={48}>
                    <BigIcon><PasteIcon /></BigIcon>
                    Paste
                    <ChevronDown size={10} />
                  </BigButton>
                  <Stack $w={36}>
                    <SmallRow><ScissorsIcon /></SmallRow>
                    <SmallRow><CopyIcon /><Tiny /></SmallRow>
                    <SmallRow><PainterIcon /></SmallRow>
                  </Stack>
                </GroupBody>
                <GroupFoot label="Clipboard" launcher />
              </Group>

              <Group $w={155}>
                <GroupBody $pad={10}>
                  <BigButton $w={48}>
                    <BigIcon><NewSlideIcon /></BigIcon>
                    New
                    <span>Slide <Tiny color="#555" /></span>
                  </BigButton>
                  <Stack>
                    <SmallRow><LayoutIcon /> Layout <Tiny color="#666" /></SmallRow>
                    <SmallRow><ResetIcon /> Reset</SmallRow>
                    <SmallRow $off><LayoutIcon off /> Section <Tiny /></SmallRow>
                  </Stack>
                </GroupBody>
                <GroupFoot label="Slides" />
              </Group>

              <Group $w={289}>
                <GroupBody $pad={8}>
                  <Stack>
                    <FontRow $h={44}>
                      <Combo $w={128} />
                      <Combo $w={52} />
                      <Cell $w={28} $size={17}>A<Raised>▴</Raised></Cell>
                      <Cell $w={26} $size={15}>A<Raised>▾</Raised></Cell>
                      <Cell $w={8} />
                      <VSep />
                      <Cell $w={30}><FillIcon /></Cell>
                    </FontRow>
                    <FontRow $h={24}>
                      <Cell $w={27} $weight={700}>B</Cell>
                      <Cell $w={27} $italic>I</Cell>
                      <Cell $w={27} $under>U</Cell>
                      <Cell $w={27} $weight={700}>S</Cell>
                      <Cell $w={27} $size={12}>abc</Cell>
                      <Cell $w={28} $size={13} $under>AV</Cell>
                      <Tiny />
                      <Cell $w={32} $size={15}>Aa</Cell>
                      <Tiny />
                      <VSep />
                      <Cell $w={38} $size={18}>A</Cell>
                      <Tiny />
                    </FontRow>
                  </Stack>
                </GroupBody>
                <GroupFoot label="Font" launcher />
              </Group>

              <Group $w={244}>
                <GroupBody $pad={10}>
                  <Stack $w={186}>
                    <FontRow $h={44}>
                      <Cell $w={24}><List size={18} strokeWidth={1.2} /></Cell>
                      <Tiny />
                      <Cell $w={31}><ListOrdered size={18} strokeWidth={1.2} /></Cell>
                      <Tiny />
                      <Cell $w={40}><IndentDecrease size={18} strokeWidth={1.2} /></Cell>
                      <Cell $w={26}><IndentIncrease size={18} strokeWidth={1.2} /></Cell>
                      <Cell $w={28}><LineSpacing /></Cell>
                      <Tiny />
                    </FontRow>
                    <FontRow $h={24}>
                      <Cell $w={24}><AlignLeft size={18} strokeWidth={1.2} /></Cell>
                      <Cell $w={27}><AlignCenter size={18} strokeWidth={1.2} /></Cell>
                      <Cell $w={27}><AlignRight size={18} strokeWidth={1.2} /></Cell>
                      <Cell $w={27}><AlignJustify size={18} strokeWidth={1.2} /></Cell>
                      <VSep />
                      <Cell $w={30}><Columns2 size={17} strokeWidth={1.2} /></Cell>
                      <Tiny />
                    </FontRow>
                  </Stack>
                  <Stack>
                    <SmallRow><TextDirIcon /><Tiny /></SmallRow>
                    <SmallRow><AlignTextIcon /><Tiny /></SmallRow>
                    <SmallRow><SmartArtIcon /><Tiny /></SmallRow>
                  </Stack>
                </GroupBody>
                <GroupFoot label="Paragraph" launcher />
              </Group>

              <Group $w={297}>
                <GroupBody $pad={10}>
                  <BigButton $w={46}>
                    <BigIcon><ShapesIcon /></BigIcon>
                    Shapes
                    <ChevronDown size={10} />
                  </BigButton>
                  <BigButton $w={52}>
                    <BigIcon><ArrangeIcon /></BigIcon>
                    Arrange
                    <ChevronDown size={10} />
                  </BigButton>
                  <BigButton $w={54} $off>
                    <BigIcon><QuickStylesIcon /></BigIcon>
                    Quick
                    <span>Styles <Tiny /></span>
                  </BigButton>
                  <Stack>
                    <SmallRow $off><FillIcon /> Shape Fill <Tiny /></SmallRow>
                    <SmallRow $off><OutlineIcon /> Shape Outline <Tiny /></SmallRow>
                    <SmallRow $off><EffectsIcon /> Shape Effects <Tiny /></SmallRow>
                  </Stack>
                </GroupBody>
                <GroupFoot label="Drawing" launcher />
              </Group>

              <Group $w={114}>
                <GroupBody $pad={14}>
                  <Stack>
                    <SmallRow><Search size={16} color="#2a70b5" style={{ transform: "scaleX(-1)" }} /> Find</SmallRow>
                    <SmallRow><ReplaceIcon /> Replace &nbsp;&nbsp;<Tiny color="#666" /></SmallRow>
                    <SmallRow><SelectIcon /> &nbsp;Select <Tiny color="#666" /></SmallRow>
                  </Stack>
                </GroupBody>
                <GroupFoot label="Editing" />
              </Group>

              <CollapseSlot><ChevronUp size={18} strokeWidth={1.2} /></CollapseSlot>
            </Ribbon>

            <Workspace>
              <SlidePane>
                <ThumbList>
                  {THUMBS.map((bars, i) => (
                    <ThumbRow key={i}>
                      <ThumbNum $active={i === 8}>{i + 1}</ThumbNum>
                      <Thumb $active={i === 8} viewBox="0 0 37 28">
                        {bars.map(([x, y, w, c], j) => (
                          <rect key={j} x={x} y={y} width={w} height="0.8" fill={c ?? "#aaa"} opacity="0.75" />
                        ))}
                      </Thumb>
                    </ThumbRow>
                  ))}
                </ThumbList>
                <Scrollbar $h={626}>
                  <ScrollStep />
                  <ScrollThumb $h={240} />
                  <ScrollGap />
                  <ScrollStep $down />
                </Scrollbar>
              </SlidePane>

              <EditorColumn>
                <EditorMain>
                  <Canvas>
                    <HRuler>
                      {RULER_H.map((n, i) => (
                        <RulerCell key={i}>
                          <Tick />
                          <Dot />
                          {n}
                          <Dot />
                        </RulerCell>
                      ))}
                    </HRuler>
                    <CanvasBody>
                      <VRuler>
                        {RULER_V.map((n, i) => (
                          <VRulerCell key={i}>
                            <VTick />
                            <Dot />
                            <b>{n}</b>
                            <Dot />
                          </VRulerCell>
                        ))}
                      </VRuler>
                      <Slide>
                        <SlideTitle>
                          HISTORY OF OPERATIONS
                          <br />
                          RESEARCH
                        </SlideTitle>
                        <SlideBody>
                          The objective was to allocate scarce resources in an effective manner to various military
                          operations and to the activities within each operation. The name Operations Research (OR)
                          came directly from the context in which it was used and developed, viz., research on
                          military operations
                        </SlideBody>
                        <Cursor />
                      </Slide>
                    </CanvasBody>
                  </Canvas>
                  <RightRail>
                    <Scrollbar $h={527}>
                      <ScrollStep />
                      <ScrollThumb $h={20} $top={132} />
                      <ScrollGap />
                      <ScrollStep $down />
                    </Scrollbar>
                    <PageStep><PageUp /></PageStep>
                    <PageStep><PageDown /></PageStep>
                  </RightRail>
                </EditorMain>
                <NotesRow>Click to add notes</NotesRow>
              </EditorColumn>
            </Workspace>

            <StatusBar>
              <StatusItem $w={100} $pad={9}>Slide 9 of 39</StatusItem>
              <StatusItem $w={37}><StatusGlyph /></StatusItem>
              <StatusItem $w={127}>English (Indonesia)</StatusItem>
              <StatusItem $w={477}><StatusGlyph /> Accessibility: Unavailable</StatusItem>
              <StatusItem $w={69}>▲ Notes</StatusItem>
              <StatusItem $w={103}><StatusGlyph $solid /> Comments</StatusItem>
              <StatusItem $w={44} $on $pad={14}><StatusGlyph /></StatusItem>
              <StatusItem $w={45} $pad={15}><StatusGlyph /></StatusItem>
              <StatusItem $w={44} $pad={15}><StatusGlyph /></StatusItem>
              <StatusItem $w={104} $pad={15}><StatusGlyph /></StatusItem>
              <StatusItem $w={107}><StatusGlyph $solid $narrow /></StatusItem>
              <StatusItem $w={45}>66%</StatusItem>
              <StatusItem $w={20}><StatusGlyph /></StatusItem>
            </StatusBar>
          </Window>
        </SharedScreen>

        <Handle />

        <Gallery>
          <Tile>
            <TileName>Hana Melisa</TileName>
            <NameChip><MutedMic /> Hana Melisa</NameChip>
          </Tile>
          <Tile>
            <Avatar>Z</Avatar>
            <NameChip><MutedMic /> zoom baa01</NameChip>
          </Tile>
          <Tile>
            <TileName>dewa anggara</TileName>
            <NameChip><MutedMic /> dewa anggara</NameChip>
          </Tile>
          <Tile $active>
            <TileName>tri susanto - UB...</TileName>
            <NameChip>tri susanto - UBakrie</NameChip>
          </Tile>
        </Gallery>
      </Middle>

      <Toolbar>
        <ToolGroup>
          <ToolItem $w={74} $mr={19}>
            <ToolIcon><SlashMic /></ToolIcon>
            Unmute
            <Caret $x={28}><ChevronUp size={12} /></Caret>
          </ToolItem>
          <ToolItem $w={74}>
            <ToolIcon><SlashVideo /></ToolIcon>
            Start Video
            <Caret $x={32}><ChevronUp size={12} /></Caret>
          </ToolItem>
        </ToolGroup>
        <ToolGroup $left={441}>
          <ToolItem $w={116}>
            <ToolIcon>
              <PeopleIcon />
              <CountLabel>4</CountLabel>
            </ToolIcon>
            Participants
          </ToolItem>
          <ToolItem $w={104}>
            <ToolIcon><ChatIcon /></ToolIcon>
            Chat
            <Caret $x={27}><ChevronUp size={12} /></Caret>
          </ToolItem>
          <ToolItem $w={82} $green>
            <ToolIcon><ShareIcon /></ToolIcon>
            Share Screen
            <Caret $x={32}><ChevronUp size={12} /></Caret>
          </ToolItem>
          <ToolItem $w={96}>
            <ToolIcon><RecordIcon /></ToolIcon>
            Record
          </ToolItem>
          <ToolItem $w={89}>
            <Hint>2 unassigned participants</Hint>
            <ToolIcon>
              <BreakoutIcon />
              <Badge>2</Badge>
            </ToolIcon>
            Breakout Rooms
          </ToolItem>
          <ToolItem $w={93}>
            <ToolIcon><ReactionIcon /></ToolIcon>
            Reactions
          </ToolItem>
          <ToolItem $w={67}>
            <ToolIcon><AppsIcon /></ToolIcon>
            Apps
          </ToolItem>
          <ToolItem $w={112}>
            <ToolIcon><BoardIcon /></ToolIcon>
            Whiteboards
          </ToolItem>
        </ToolGroup>
        <LeaveButton>Leave Room</LeaveButton>
      </Toolbar>
    </Page>
  );
}
